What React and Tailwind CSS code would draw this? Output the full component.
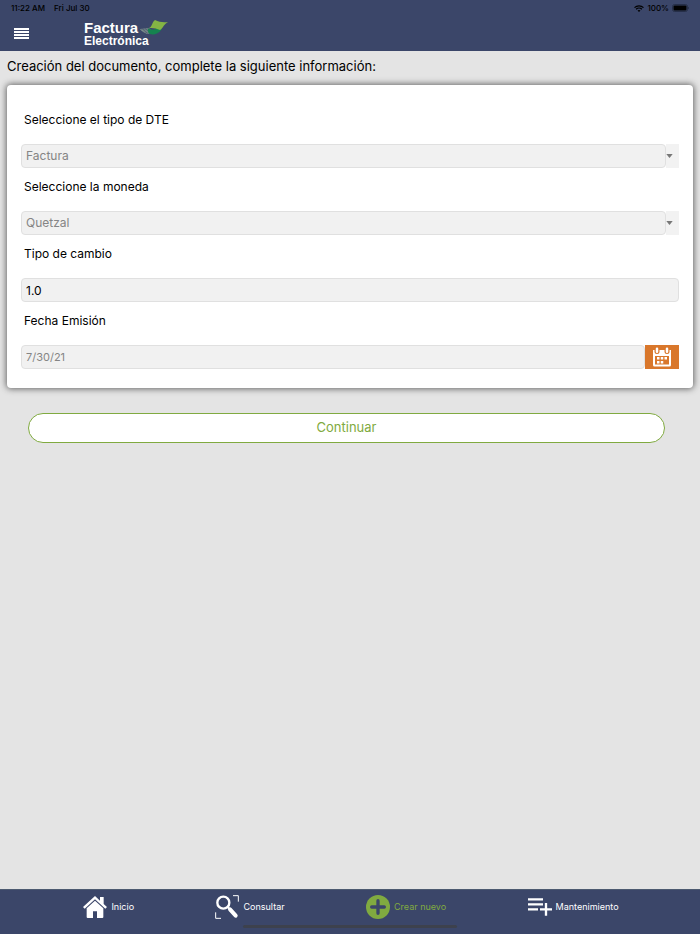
import React, { useState } from "react";

const fieldClass =
  "block h-6 min-w-0 flex-1 appearance-none rounded border border-[#e0e0e0] bg-[#f1f1f1] px-1 outline-none";

function StatusBar() {
  return (
    <div className="flex h-4 items-center justify-between px-[11px] text-[8px] font-medium text-black">
      <div className="flex gap-[9px]">
        <span>11:22 AM</span>
        <span>Fri Jul 30</span>
      </div>
      <div className="flex items-center gap-[3px]">
        <svg viewBox="0 0 20 14" className="h-[7px] w-[10px]" fill="none" stroke="currentColor" strokeWidth="2.6">
          <path d="M1 5.2C6 .4 14 .4 19 5.2" />
          <path d="M4.2 8.6c3.2-3.1 8.4-3.1 11.6 0" />
          <path d="M10 14l-3-3c1.7-1.5 4.3-1.5 6 0z" fill="currentColor" stroke="none" />
        </svg>
        <span>100%</span>
        <svg viewBox="0 0 34 16" className="h-2 w-[17px]">
          <rect x="1" y="1" width="30" height="14" rx="4" fill="none" stroke="#20283f" strokeWidth="1.5" />
          <rect x="3" y="3" width="26" height="10" rx="2" />
          <path d="M32 5.5c2 .5 2 4.5 0 5z" fill="#20283f" />
        </svg>
      </div>
    </div>
  );
}

function Logo() {
  return (
    <div className="font-['Liberation_Sans',Arial,sans-serif] font-bold text-white">
      <div className="flex h-[14px] items-center gap-[2px]">
        <span className="text-[15px] leading-[14px]">Factura</span>
        <svg viewBox="0 0 84 48" className="h-4 w-7">
          <path d="M0 27l27-2 14 13-20 3c-8-1-15-7-21-14z" fill="#8c9f93" />
          <path d="M3 29h25M8 33h26M14 37h25M7 26l16 15M15 25l16 14M23 25l13 13" stroke="#3b4669" strokeWidth="1.5" />
          <path d="M24 25c14 7 22 5 28-3l14 4c-9 15-22 18-33 17-8-1-10-8-9-18z" fill="#15834f" />
          <path d="M24 25C38 22 35 6 45 0c12 6 25 8 39 6-13 7-14 18-24 24-12-5-24-8-36-5z" fill="#84b444" />
        </svg>
      </div>
      <div className="text-[12px] leading-[12px]">Electrónica</div>
    </div>
  );
}

function Field({ id, label, children }) {
  return (
    <div>
      <label htmlFor={id} className="block pl-[3px] text-[12px] leading-5 text-black">
        {label}
      </label>
      <div className="mt-[14px] flex h-6">{children}</div>
    </div>
  );
}

function SelectField({ id, label, options }) {
  return (
    <Field id={id} label={label}>
      <select id={id} className={`${fieldClass} text-[12px] text-[#858585]`}>
        {options.map((option) => (
          <option key={option}>{option}</option>
        ))}
      </select>
      <span className="flex w-[13px] items-center bg-[#f2f2f2]">
        <svg viewBox="0 0 8 5" className="h-1 w-[7px]" fill="#777777">
          <path d="M0 0h8L4 5z" />
        </svg>
      </span>
    </Field>
  );
}

function CalendarIcon() {
  return (
    <svg viewBox="0 0 36 40" className="h-5 w-[18px]">
      <path d="M0 6h36v30a3 3 0 0 1-3 3H3a3 3 0 0 1-3-3z" fill="#fff" />
      <path d="M4 18h28v17H4z" fill="#d9772b" />
      <rect x="3" y="-2" width="10" height="16" rx="5" fill="#d9772b" />
      <rect x="23" y="-2" width="10" height="16" rx="5" fill="#d9772b" />
      <rect x="5.5" y="1" width="5" height="11" rx="2.5" fill="#fff" />
      <rect x="25.5" y="1" width="5" height="11" rx="2.5" fill="#fff" />
      <path
        d="M8 20h5v5H8zM15.5 20h5v5h-5zM23 20h5v5h-5zM8 28h5v5H8zM15.5 28h5v5h-5z"
        fill="#fff"
      />
    </svg>
  );
}

function HomeIcon() {
  return (
    <svg viewBox="0 0 72 66" className="h-[22px] w-6" fill="#fff">
      <path d="M36 0L0 33l5 5L36 10l31 28 5-5-10-9V3H51v11z" />
      <path d="M36 14L11 37v26a3 3 0 0 0 3 3h16V46h12v20h16a3 3 0 0 0 3-3V37z" />
    </svg>
  );
}

function SearchIcon() {
  return (
    <svg viewBox="0 0 72 72" className="h-6 w-6" fill="none" stroke="#fff">
      <circle cx="25" cy="23" r="18" strokeWidth="7" />
      <path d="M38 36l7 7" strokeWidth="6" />
      <path d="M45 43l17 19" strokeWidth="12" strokeLinecap="round" />
      <path d="M54 2h16v18M2 52v18h16" strokeWidth="3" />
    </svg>
  );
}

function PlusIcon() {
  return (
    <svg viewBox="0 0 72 72" className="h-6 w-6">
      <circle cx="36" cy="36" r="36" fill="#80aa40" />
      <path d="M36 17v38M17 36h38" stroke="#3b4669" strokeWidth="10" strokeLinecap="round" />
    </svg>
  );
}

function ListPlusIcon() {
  return (
    <svg viewBox="0 0 72 72" className="h-6 w-6" fill="none" stroke="#fff" strokeWidth="7">
      <path d="M0 13h45M0 28h45M0 43h30M36 43h36M54 24v38" />
    </svg>
  );
}

const navItems = [
  { title: "Inicio", icon: HomeIcon },
  { title: "Consultar", icon: SearchIcon },
  { title: "Crear nuevo", icon: PlusIcon, active: true },
  { title: "Mantenimiento", icon: ListPlusIcon },
];

export default function App() {
  const [rate, setRate] = useState("1.0");
  const [date, setDate] = useState("7/30/21");

  return (
    <div className="flex min-h-screen flex-col bg-[#e4e4e4] font-[Inter,sans-serif]">
      {/* Header */}
      <header className="bg-[#3b4669] pb-[3px]">
        <StatusBar />
        <div className="flex items-center gap-[55px] pt-[5px] pl-[14px] pb-px">
          <button type="button" aria-label="Menú" className="pb-[2px]">
            <svg viewBox="0 0 15 11" className="h-[11px] w-[15px]" fill="#fff">
              <path d="M0 0h15v2H0zM0 3h15v2H0zM0 6h15v2H0zM0 9h15v2H0z" />
            </svg>
          </button>
          <Logo />
        </div>
      </header>

      <main className="flex-1">
        <h1 className="px-[7px] pt-[5px] text-[13px] leading-5 text-black">
          Creación del documento, complete la siguiente información:
        </h1>

        <form onSubmit={(e) => e.preventDefault()}>
          <div className="mx-[7px] mt-[9px] flex flex-col gap-[9px] rounded bg-white px-[14px] pt-[25px] pb-[19px] shadow-[0_0_6px_1px_#666666]">
            <SelectField id="dte" label="Seleccione el tipo de DTE" options={["Factura"]} />
            <SelectField id="moneda" label="Seleccione la moneda" options={["Quetzal"]} />
            <Field id="cambio" label="Tipo de cambio">
              <input
                id="cambio"
                type="text"
                value={rate}
                onChange={(e) => setRate(e.target.value)}
                className={`${fieldClass} text-[12px] text-black`}
              />
            </Field>
            <Field id="fecha" label="Fecha Emisión">
              <input
                id="fecha"
                type="text"
                value={date}
                onChange={(e) => setDate(e.target.value)}
                className={`${fieldClass} text-[11px] text-[#858585]`}
              />
              <button
                type="button"
                aria-label="Elegir fecha"
                className="flex w-[34px] items-center justify-center bg-[#d9772b]"
              >
                <CalendarIcon />
              </button>
            </Field>
          </div>

          <div className="mt-[25px] pr-[35px] pl-[28px]">
            <button
              type="submit"
              className="h-[30px] w-full rounded-full border border-[#80aa40] bg-white text-[13px] text-[#80aa40]"
            >
              Continuar
            </button>
          </div>
        </form>
      </main>

      {/* Bottom navigation */}
      <nav className="relative flex h-[45px] items-start justify-evenly border-t border-[#4c5a70] bg-[#3b4669] pt-[5px] pl-[2px]">
        {navItems.map(({ title, icon: Icon, active }) => (
          <a
            key={title}
            href="#"
            className={`flex h-6 items-center gap-1 text-[9px] ${active ? "text-[#80aa40]" : "text-white"}`}
          >
            <Icon />
            {title}
          </a>
        ))}
        <span className="absolute bottom-[6px] left-1/2 h-[3px] w-[214px] -translate-x-1/2 rounded-full bg-[#3d414d]" />
      </nav>
    </div>
  );
}
